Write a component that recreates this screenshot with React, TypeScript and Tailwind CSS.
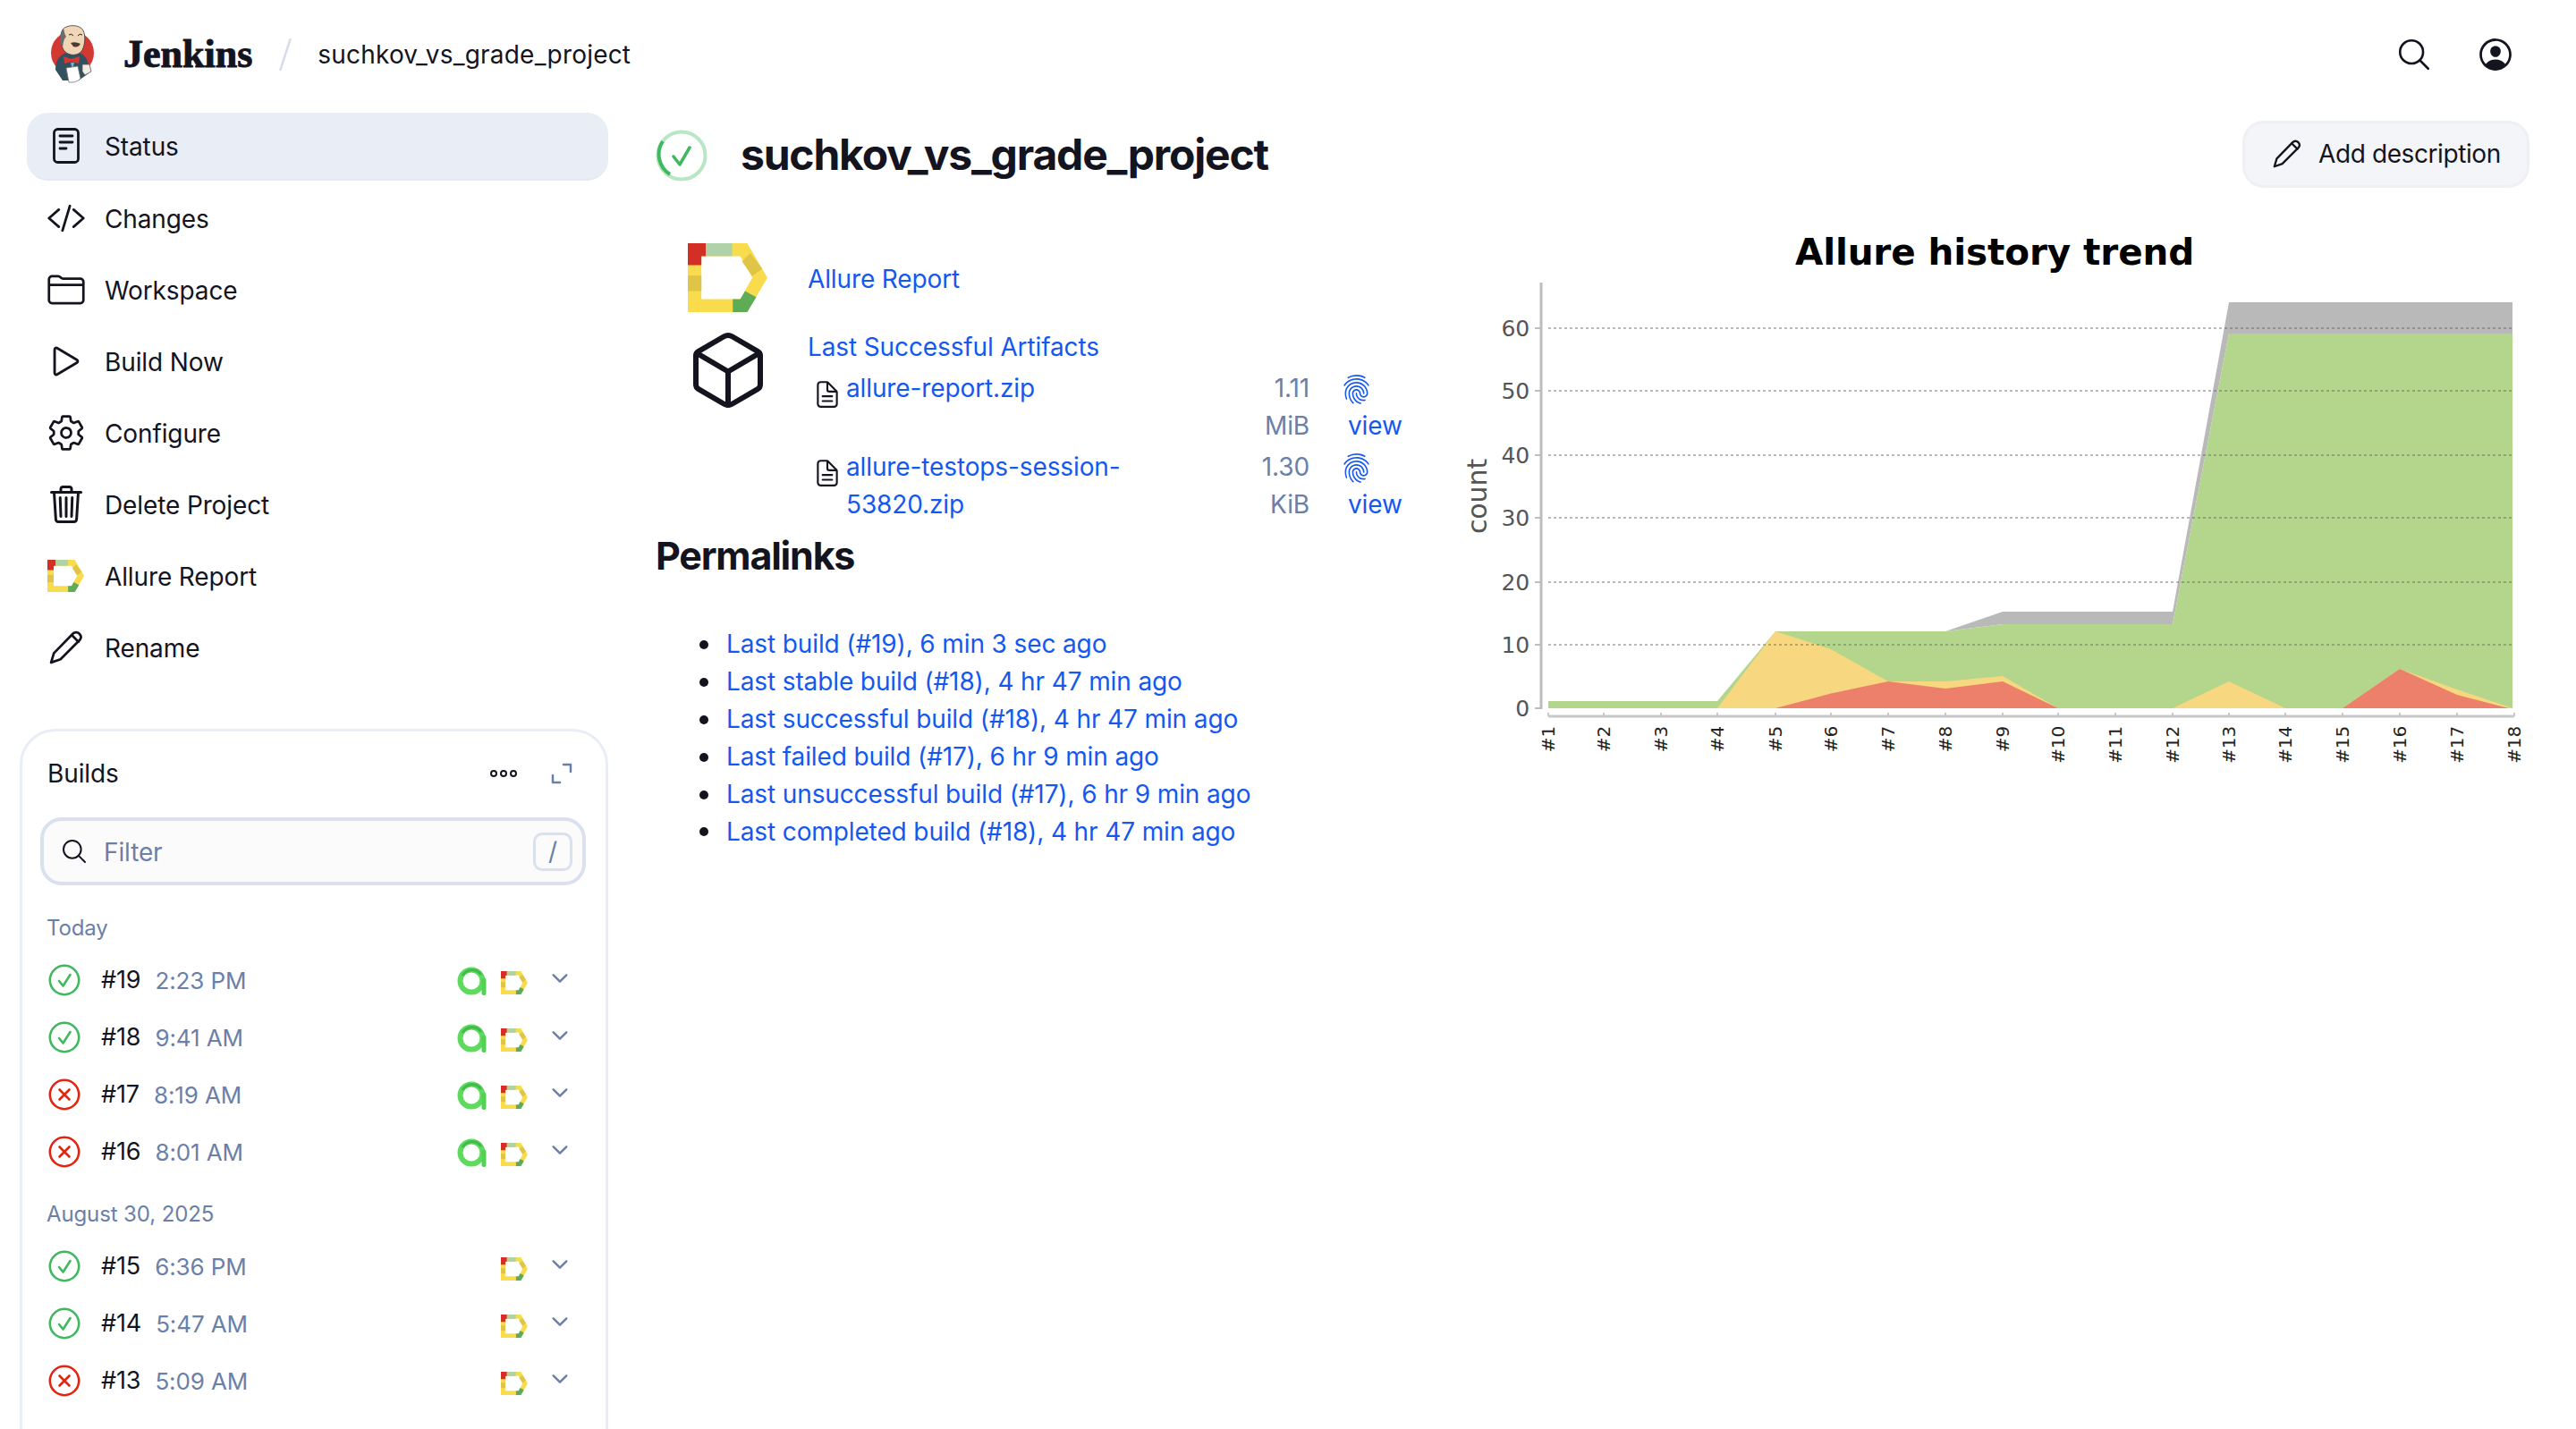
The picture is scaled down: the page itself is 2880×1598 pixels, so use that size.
import React from "react";
import {
  IoCodeSlashOutline,
  IoFolderOutline,
  IoPlayOutline,
  IoSettingsOutline,
  IoTrashOutline,
  IoCubeOutline,
  IoSearchOutline,
  IoPersonCircleOutline,
  IoChevronDownOutline,
  IoDocumentTextOutline,
  IoFingerPrintOutline,
} from "react-icons/io5";

const AllureLogo = ({ className }: { className: string }) => (
  <svg viewBox="58 35 264 230" className={className} preserveAspectRatio="none">
    <path fillRule="evenodd" fill="#f9dc4e" d="M58 35H255L322 150L255 265H58ZM103 78V222H232L272 150L232 78Z" />
    <path fill="#d32f26" d="M58 35H118V78H103V108H58Z" />
    <path fill="#b0d2a8" d="M118 35H205V78H118Z" />
    <path fill="#dfc447" d="M58 143H103V195H58Z" />
    <path fill="#dfc447" d="M265 68L305 120L272 145L238 96Z" />
    <path fill="#5fac57" d="M207 222H232L248 195L285 215L255 265H207Z" />
  </svg>
);

const AntA = () => (
  <svg viewBox="0 0 34 33" className="w-[34px] h-[33px] shrink-0">
    <circle cx="16" cy="16" r="12.5" fill="none" stroke="#5cdb5c" strokeWidth="6" />
    <path d="M6 10A12.5 12.5 0 0 1 27 9" fill="none" stroke="#45b94a" strokeWidth="3" />
    <path d="M30 15V29.5" stroke="#55d055" strokeWidth="5" strokeLinecap="round" />
  </svg>
);

const StatusOk = () => (
  <svg viewBox="0 0 36 36" className="w-[36px] h-[36px] shrink-0">
    <circle cx="18" cy="18" r="16.2" fill="none" stroke="#3fb95f" strokeWidth="2.6" />
    <path d="M12 19L16.5 24.5L24.5 12" fill="none" stroke="#3fb95f" strokeWidth="2.6" strokeLinecap="round" strokeLinejoin="round" />
  </svg>
);

const StatusFail = () => (
  <svg viewBox="0 0 36 36" className="w-[36px] h-[36px] shrink-0">
    <circle cx="18" cy="18" r="16.2" fill="none" stroke="#e6230f" strokeWidth="2.6" />
    <path d="M12.5 12.5L23.5 23.5M23.5 12.5L12.5 23.5" fill="none" stroke="#e6230f" strokeWidth="2.6" strokeLinecap="round" />
  </svg>
);

const Pencil = ({ className }: { className: string }) => (
  <svg viewBox="0 0 36 36" className={className} fill="none" stroke="#14141f" strokeWidth="2.6" strokeLinejoin="round" strokeLinecap="round">
    <path d="M2 34L5 24L25 3.5C27 1.5 30 1.5 32 3.5C34 5.5 34 8 32.500 10L12 30.500Z" />
    <path d="M24 5L31 12" />
  </svg>
);

const StatusDoc = () => (
  <svg viewBox="0 0 30 40" className="w-[30px] h-[40px]" fill="none" stroke="#14141f" strokeWidth="2.8" strokeLinecap="round">
    <rect x="1.500" y="1.500" width="27" height="37" rx="4" />
    <path d="M8 9H22M8 16H22M8 23H15" />
  </svg>
);

const Mascot = () => (
  <svg viewBox="0 0 48 66" className="w-[48px] h-[66px] shrink-0">
    <ellipse cx="24" cy="31" rx="24" ry="24" fill="#d33833" />
    <path d="M5 50C5 38 11 33 17 31L34 32C41 36 43 44 42 54L31 62H13Z" fill="#335061" />
    <path d="M13 5C18 -1 32 -1 36 6C39 12 38 22 35 28C31 35 20 35 15 29C11 24 9 12 13 5Z" fill="#f0d6b7" stroke="#3a3a3a" strokeWidth="0.8" />
    <path d="M14 4C9 9 9 20 13 25C14 20 14 16 17 13C15 10 15 7 14 4Z" fill="#6d6b6d" />
    <path d="M22 20Q27 18 33 21Q30 26 25 24Z" fill="#4a3a30" />
    <path d="M20 11Q23 9 25 12M30 12Q32 9 35 11" stroke="#222" strokeWidth="1" fill="none" />
    <path d="M14 35L23 38L32 35L31 43L23 41L15 43Z" fill="#d33833" />
    <path d="M22 42H26L24 50Z" fill="#81b0c4" />
    <path d="M17 48L30 46L33 60Q28 65 20 64Z" fill="#fff" stroke="#777" strokeWidth="0.8" />
    <path d="M35 44L43 44L45 52L38 56L35 52Z" fill="#f4ede4" stroke="#555" strokeWidth="0.8" />
  </svg>
);

const navItems: [string, React.ReactNode][] = [
  ["Changes", <IoCodeSlashOutline className="text-[44px]" />],
  ["Workspace", <IoFolderOutline className="text-[44px]" />],
  ["Build Now", <IoPlayOutline className="text-[46px]" />],
  ["Configure", <IoSettingsOutline className="text-[44px]" />],
  ["Delete Project", <IoTrashOutline className="text-[48px]" />],
  ["Allure Report", <AllureLogo className="w-[41px] h-[36px]" />],
  ["Rename", <Pencil className="w-[38px] h-[38px]" />],
];

const Build = ({ n, t, ok, ant }: { n: string; t: string; ok: boolean; ant?: boolean }) => (
  <div className="flex items-center h-[64px] pl-[29px] pr-[38px]">
    {ok ? <StatusOk /> : <StatusFail />}
    <span className="ml-[23px] text-[27px]">{n}</span>
    <span className="ml-[16px] text-[26px] text-[#6a80a9]">{t}</span>
    <div className="ml-auto flex items-center">
      {ant && <div className="mt-[2px]"><AntA /></div>}
      <div className="ml-[15px] mr-[23px] mt-[6px]"><AllureLogo className="w-[30px] h-[26px]" /></div>
      <IoChevronDownOutline className="text-[26px] text-[#6a80a9] -mt-[4px]" />
    </div>
  </div>
);

const links = [
  "Last build (#19), 6 min 3 sec ago",
  "Last stable build (#18), 4 hr 47 min ago",
  "Last successful build (#18), 4 hr 47 min ago",
  "Last failed build (#17), 6 hr 9 min ago",
  "Last unsuccessful build (#17), 6 hr 9 min ago",
  "Last completed build (#18), 4 hr 47 min ago",
];

const Artifact = ({ name, size, unit }: { name: React.ReactNode; size: string; unit: string }) => (
  <div className="flex h-[88px] leading-[42px]">
    <IoDocumentTextOutline className="text-[34px] mt-[11px] ml-[3px] w-[38px] mr-[2px] shrink-0 text-[#14141f]" />
    <div className="w-[400px] text-[#1558f0]">{name}</div>
    <div className="w-[118px] text-right text-[#6a80a9]">{size}<br />{unit}</div>
    <div className="ml-[37px] text-[#1558f0]">
      <div className="h-[42px] flex items-center pt-[2px]"><IoFingerPrintOutline className="text-[35px] -ml-[2px]" /></div>
      <div className="ml-[6px]">view</div>
    </div>
  </div>
);

const X_TICKS = [1731, 1793, 1857, 1920, 1985, 2047, 2111, 2175, 2239, 2301, 2365, 2429, 2492, 2555, 2619, 2683, 2747, 2811];
const GRID: [number, number][] = [[60, 367], [50, 437], [40, 509], [30, 579], [20, 651], [10, 721], [0, 792]];

const Chart = () => (
  <svg viewBox="1620 250 1260 640" className="w-[1260px] h-[640px] shrink-0">
    <text x="2230" y="296" textAnchor="middle" fontFamily="DejaVu Sans" fontWeight="700" fontSize="40.500" fill="#000">Allure history trend</text>
    <text x="0" y="0" transform="translate(1662 555) rotate(-90)" textAnchor="middle" fontFamily="DejaVu Sans" fontSize="30" fill="#555">count</text>
    <path d="M1723 316V793" stroke="#bdbdbd" strokeWidth="3" fill="none" />
    <path d="M1731 801H2811" stroke="#c8c8c8" strokeWidth="3" fill="none" />
    <path d="M2175 706L2239 684H2429L2492 338H2809V373H2492L2429 698H2239L2175 706Z" fill="#b9b9b9" />
    <path d="M1731 784H1920L1985 706H2175L2239 698H2429L2492 373H2809V792H1731Z" fill="#b4d58c" />
    <path d="M1920 792L1985 706L2047 726L2111 762L2175 762L2239 756L2301 792ZM2429 792L2492 762L2555 792ZM2619 792L2683 748L2747 771L2809 792Z" fill="#f7d77f" />
    <path d="M1985 792L2047 775.500L2111 762L2175 770L2239 762L2301 792ZM2619 792L2683 748L2747 777L2805 792Z" fill="#ec806a" />
    {GRID.map(([v, y]) => (
      <g key={v}>
        <text x="1710" y={y + 9} textAnchor="end" fontFamily="DejaVu Sans" fontSize="25" fill="#555">{v}</text>
        <path d={`M1716 ${y}H1723`} stroke="#bdbdbd" strokeWidth="2" />
        {v !== 0 && <path d={`M1731 ${y}H2809`} stroke="#666" strokeOpacity="0.6" strokeWidth="1.500" strokeDasharray="3 3" />}
      </g>
    ))}
    {X_TICKS.map((x, i) => (
      <g key={x}>
        <path d={`M${x} 797V801`} stroke="#c8c8c8" strokeWidth="2" />
        <text x="0" y="0" transform={`translate(${x + 7} 812) rotate(-90)`} textAnchor="end" fontFamily="DejaVu Sans" fontSize="20" fill="#222">{`#${i + 1}`}</text>
      </g>
    ))}
  </svg>
);

export default function App() {
  return (
    <div className="w-[2880px] h-[1598px] overflow-hidden bg-white text-[#14141f] text-[28px] tracking-[-0.12px] [font-family:Inter,sans-serif]">
      <header className="flex items-center h-[126px] pb-[4px] pl-[57px] pr-[68px]">
        <Mascot />
        <span className="ml-[33px] text-[44px] leading-none font-bold tracking-normal [font-family:'Liberation_Serif',serif] [-webkit-text-stroke:1px_#14141f]">Jenkins</span>
        <svg viewBox="0 0 14 36" className="ml-[30px] w-[14px] h-[36px]">
          <path d="M1.500 35L12.500 1" stroke="#d5dceb" strokeWidth="2.500" strokeLinecap="round" />
        </svg>
        <span className="ml-[29px] tracking-[0.2px]">suchkov_vs_grade_project</span>
        <div className="ml-auto flex items-center gap-[48px]">
          <IoSearchOutline className="text-[42px]" />
          <IoPersonCircleOutline className="text-[44px]" />
        </div>
      </header>
      <div className="flex">
        <aside className="w-[658px] ml-[22px] shrink-0">
          <nav className="flex flex-col gap-[4px] ml-[8px]">
            <div className="flex items-center h-[76px] rounded-[24px] bg-[#e9edf5] border-b-2 border-[#e4e8f1]">
              <div className="w-[87px] flex justify-center"><StatusDoc /></div>
              <span className="mt-[2px]">Status</span>
            </div>
            {navItems.map(([label, icon]) => (
              <div key={label} className="flex items-center h-[76px]">
                <div className="w-[87px] flex justify-center">{icon}</div>
                <span className="mt-[2px]">{label}</span>
              </div>
            ))}
          </nav>
          <section className="mt-[53px] h-[900px] border-[3px] border-[#e9edf5] rounded-[40px]">
            <div className="flex items-center h-[96px] pl-[28px] pr-[37px] pb-[2px]">
              <span>Builds</span>
              <svg viewBox="0 0 32 10" className="ml-auto w-[32px] h-[10px]" fill="none" stroke="#14141f" strokeWidth="2">
                <circle cx="5" cy="5" r="3" /><circle cx="16" cy="5" r="3" /><circle cx="27" cy="5" r="3" />
              </svg>
              <svg viewBox="0 0 24 24" className="ml-[37px] w-[24px] h-[24px]" fill="none" stroke="#6a80a9" strokeWidth="2.500" strokeLinecap="round" strokeLinejoin="round">
                <path d="M14 2H22V10M2 14V22H10" />
              </svg>
            </div>
            <div className="ml-[20px] mr-[22px] h-[76px] rounded-[24px] border-[4px] border-[#d9e0ee] bg-[#fbfbfc] flex items-center pl-[18px] pr-[11px]">
              <IoSearchOutline className="text-[32px]" />
              <span className="ml-[17px] mt-[1px] text-[#6a80a9]">Filter</span>
              <div className="ml-auto w-[44px] h-[43px] rounded-[10px] border-[3px] border-[#d9e0ee] flex items-center justify-center text-[#6a80a9]">/</div>
            </div>
            <div className="mt-[32px] h-[32px] leading-[32px] pl-[27px] text-[24px] text-[#6a80a9]">Today</div>
            <div className="mt-[10px]">
              <Build n="#19" t="2:23 PM" ok ant />
              <Build n="#18" t="9:41 AM" ok ant />
              <Build n="#17" t="8:19 AM" ok={false} ant />
              <Build n="#16" t="8:01 AM" ok={false} ant />
            </div>
            <div className="mt-[22px] h-[32px] leading-[32px] pl-[27px] text-[24px] text-[#6a80a9]">August 30, 2025</div>
            <div className="mt-[10px]">
              <Build n="#15" t="6:36 PM" ok />
              <Build n="#14" t="5:47 AM" ok />
              <Build n="#13" t="5:09 AM" ok={false} />
            </div>
          </section>
        </aside>
        <main className="flex-1 min-w-0 -mt-[126px] pt-[126px]">
          <div className="flex items-center h-[96px] ml-[53px] mr-[52px]">
            <svg viewBox="0 0 58 58" className="w-[58px] h-[58px] shrink-0" fill="none" strokeWidth="4">
              <circle cx="29" cy="29" r="26.500" stroke="#b9e6c4" />
              <path d="M16 50A26.500 26.500 0 0 1 8 13" stroke="#3fb95f" />
              <path d="M20 30L27 39L38 20" stroke="#3fb95f" strokeLinecap="round" strokeLinejoin="round" strokeWidth="3.500" />
            </svg>
            <h1 className="ml-[37px] -mt-[2px] text-[48px] font-bold tracking-[-1.2px]">suchkov_vs_grade_project</h1>
            <div className="ml-auto -mt-[4px] flex items-center w-[321px] h-[75px] rounded-[24px] bg-[#f4f5f9] border-[3px] border-[#eff0f4] pl-[31px] tracking-[-0.4px]">
              <Pencil className="w-[32px] h-[32px]" />
              <span className="ml-[19px]">Add description</span>
            </div>
          </div>
          <div className="flex">
            <div className="w-[887px] shrink-0 ml-[53px]">
              <div className="flex h-[77px] mt-[50px]">
                <div className="w-[170px] pl-[36px]"><AllureLogo className="w-[89px] h-[77px]" /></div>
                <div className="text-[#1558f0] mt-[19px]">Allure Report</div>
              </div>
              <div className="flex mt-[18px]">
                <div className="w-[170px] pl-[36px] shrink-0"><IoCubeOutline className="text-[96px] -ml-[3px] -mt-[1px]" /></div>
                <div>
                  <div className="text-[#1558f0] h-[46px] leading-[42px]">Last Successful Artifacts</div>
                  <Artifact name="allure-report.zip" size="1.11" unit="MiB" />
                  <Artifact name={<>allure-testops-session-<br />53820.zip</>} size="1.30" unit="KiB" />
                </div>
              </div>
              <h2 className="text-[43px] font-bold leading-[60px] tracking-[-1.2px] mt-[2px]">Permalinks</h2>
              <ul className="mt-[49px] ml-[49px] text-[#1558f0] leading-[41.900px]">
                {links.map((l) => (
                  <li key={l} className="flex items-center gap-[20px]">
                    <span className="w-[10px] h-[10px] rounded-full bg-[#14141f] shrink-0" />
                    <span>{l}</span>
                  </li>
                ))}
              </ul>
            </div>
            <div className="mt-[28px]">
              <Chart />
            </div>
          </div>
        </main>
      </div>
    </div>
  );
}
